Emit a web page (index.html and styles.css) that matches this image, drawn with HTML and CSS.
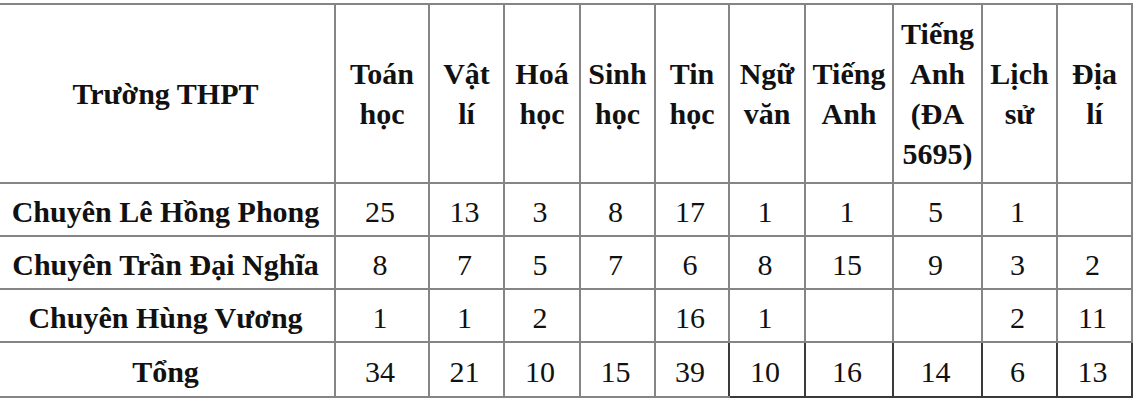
FILE: index.html
```html
<!DOCTYPE html>
<html lang="vi">
<head>
<meta charset="utf-8">
<title>Bảng</title>
<link rel="stylesheet" href="styles.css">
</head>
<body>
<div class="wrap">
<table class="grid">
  <colgroup>
    <col class="c-name">
    <col class="c94"><col class="c75"><col class="c76"><col class="c75"><col class="c74">
    <col class="c76"><col class="c88"><col class="c89"><col class="c75"><col class="c75">
  </colgroup>
  <thead>
    <tr class="head">
      <th>Trường THPT</th>
      <th>Toán<br>học</th>
      <th>Vật<br>lí</th>
      <th>Hoá<br>học</th>
      <th>Sinh<br>học</th>
      <th>Tin<br>học</th>
      <th>Ngữ<br>văn</th>
      <th>Tiếng<br>Anh</th>
      <th>Tiếng<br>Anh<br>(ĐA<br>5695)</th>
      <th>Lịch<br>sử</th>
      <th>Địa<br>lí</th>
    </tr>
  </thead>
  <tbody>
    <tr class="row">
      <th class="name">Chuyên Lê Hồng Phong</th>
      <td>25</td><td>13</td><td>3</td><td>8</td><td>17</td><td>1</td><td>1</td><td>5</td><td>1</td><td></td>
    </tr>
    <tr class="row">
      <th class="name">Chuyên Trần Đại Nghĩa</th>
      <td>8</td><td>7</td><td>5</td><td>7</td><td>6</td><td>8</td><td>15</td><td>9</td><td>3</td><td>2</td>
    </tr>
    <tr class="row">
      <th class="name">Chuyên Hùng Vương</th>
      <td>1</td><td>1</td><td>2</td><td></td><td>16</td><td>1</td><td></td><td></td><td>2</td><td>11</td>
    </tr>
    <tr class="row last">
      <th class="name">Tổng</th>
      <td>34</td><td>21</td><td>10</td><td>15</td><td class="dkr">39</td><td class="dk">10</td><td class="dk">16</td><td class="dk">14</td><td class="dk">6</td><td class="dk">13</td>
    </tr>
  </tbody>
</table>
</div>
</body>
</html>
```
FILE: styles.css
```css
html, body {
  margin: 0;
  padding: 0;
  background: #ffffff;
}
.wrap {
  padding-top: 3px;
  margin-left: -5px;
}
.grid {
  border-collapse: collapse;
  table-layout: fixed;
  width: 1137px;
  font-family: "Liberation Serif", "Times New Roman", serif;
  font-size: 30px;
  color: #111111;
}
.c-name { width: 339px; }
.c94 { width: 94px; }
.c75 { width: 75px; }
.c76 { width: 76px; }
.c74 { width: 74px; }
.c88 { width: 88px; }
.c89 { width: 89px; }
.grid th, .grid td {
  border: 2px solid #858585;
  text-align: center;
  vertical-align: middle;
  padding: 0;
}
.grid th {
  font-weight: bold;
}
.head { height: 179px; }
.head th { line-height: 40px; }
.row { height: 53px; }
.row td, .row th {
  line-height: 34px;
  padding-top: 5px;
  padding-right: 4px;
}
.row .name { padding-right: 0; }
.last { height: 55px; }
.grid td.dk { border-color: #3a3a3a; }
.grid td.dkr { border-right-color: #3a3a3a; }
```
